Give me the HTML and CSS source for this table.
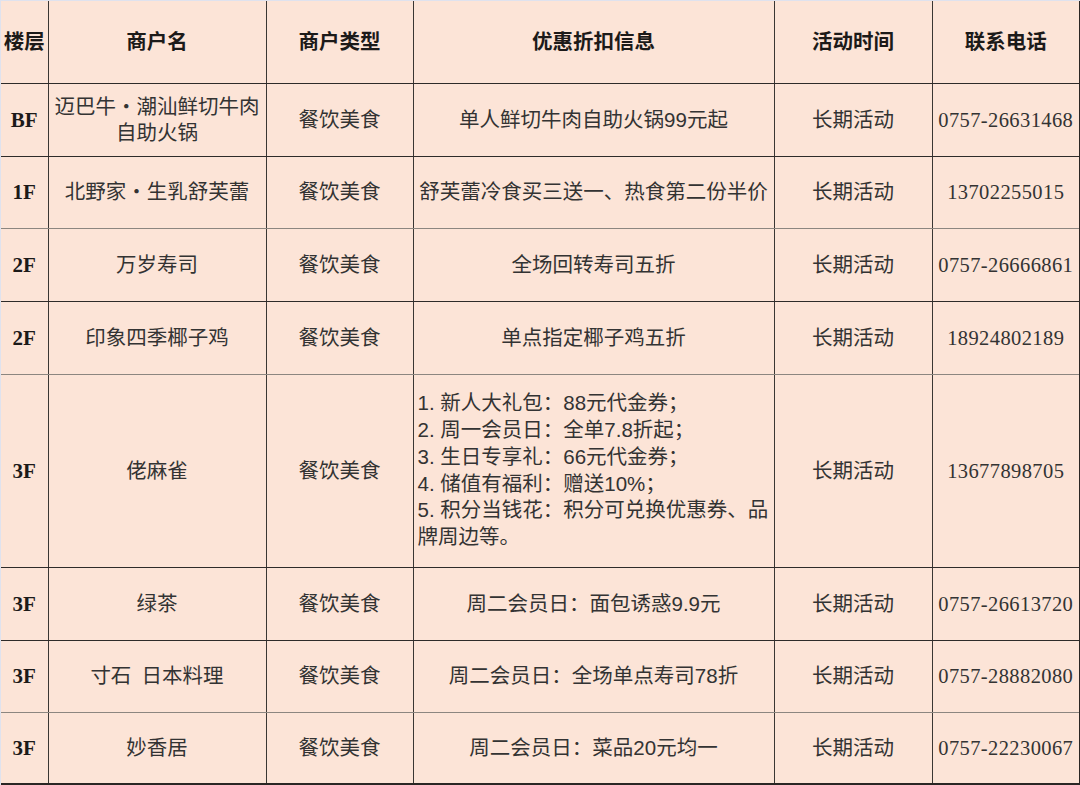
FILE: index.html
```html
<!DOCTYPE html>
<html lang="zh-CN">
<head>
<meta charset="utf-8">
<title>商户优惠信息</title>
<link rel="stylesheet" href="styles.css">
</head>
<body>
<table class="sheet">
  <colgroup>
    <col class="c-floor">
    <col class="c-name">
    <col class="c-type">
    <col class="c-deal">
    <col class="c-time">
    <col class="c-tel">
  </colgroup>
  <thead>
    <tr class="head">
      <th>楼层</th>
      <th>商户名</th>
      <th>商户类型</th>
      <th>优惠折扣信息</th>
      <th>活动时间</th>
      <th>联系电话</th>
    </tr>
  </thead>
  <tbody>
    <tr class="row">
      <td class="floor">BF</td>
      <td>迈巴牛・潮汕鲜切牛肉<br>自助火锅</td>
      <td>餐饮美食</td>
      <td class="deal">单人鲜切牛肉自助火锅99元起</td>
      <td>长期活动</td>
      <td class="tel">0757-26631468</td>
    </tr>
    <tr class="row short soft">
      <td class="floor">1F</td>
      <td>北野家・生乳舒芙蕾</td>
      <td>餐饮美食</td>
      <td class="deal">舒芙蕾冷食买三送一、热食第二份半价</td>
      <td>长期活动</td>
      <td class="tel">13702255015</td>
    </tr>
    <tr class="row">
      <td class="floor">2F</td>
      <td>万岁寿司</td>
      <td>餐饮美食</td>
      <td class="deal">全场回转寿司五折</td>
      <td>长期活动</td>
      <td class="tel">0757-26666861</td>
    </tr>
    <tr class="row soft">
      <td class="floor">2F</td>
      <td>印象四季椰子鸡</td>
      <td>餐饮美食</td>
      <td class="deal">单点指定椰子鸡五折</td>
      <td>长期活动</td>
      <td class="tel">18924802189</td>
    </tr>
    <tr class="row tall">
      <td class="floor">3F</td>
      <td>佬麻雀</td>
      <td>餐饮美食</td>
      <td class="deal list">1. 新人大礼包：88元代金券；<br>2. 周一会员日：全单7.8折起；<br>3. 生日专享礼：66元代金券；<br>4. 储值有福利：赠送10%；<br>5. 积分当钱花：积分可兑换优惠券、品牌周边等。</td>
      <td>长期活动</td>
      <td class="tel">13677898705</td>
    </tr>
    <tr class="row">
      <td class="floor">3F</td>
      <td>绿茶</td>
      <td>餐饮美食</td>
      <td class="deal">周二会员日：面包诱惑9.9元</td>
      <td>长期活动</td>
      <td class="tel">0757-26613720</td>
    </tr>
    <tr class="row short soft">
      <td class="floor">3F</td>
      <td>寸石&nbsp;&nbsp;日本料理</td>
      <td>餐饮美食</td>
      <td class="deal">周二会员日：全场单点寿司78折</td>
      <td>长期活动</td>
      <td class="tel">0757-28882080</td>
    </tr>
    <tr class="row short last">
      <td class="floor">3F</td>
      <td>妙香居</td>
      <td>餐饮美食</td>
      <td class="deal">周二会员日：菜品20元均一</td>
      <td>长期活动</td>
      <td class="tel">0757-22230067</td>
    </tr>
  </tbody>
</table>
</body>
</html>
```

FILE: styles.css
```css
html, body {
  margin: 0;
  padding: 0;
}

body {
  background: #dfe2ee;
  width: 1080px;
  height: 785px;
  overflow: hidden;
}

.sheet {
  margin: 1px 0 0 1px;
  width: 1079px;
  table-layout: fixed;
  border-collapse: collapse;
  background: #fce4d7;
  font-family: "Liberation Serif", "Noto Sans CJK SC", serif;
  font-size: 20.5px;
  line-height: 26px;
  color: #333;
}

.c-floor { width: 47px; }
.c-name { width: 218px; }
.c-type { width: 147px; }
.c-deal { width: 361px; }
.c-time { width: 158px; }
.c-tel { width: 148px; }

.sheet th,
.sheet td {
  padding: 0;
  text-align: center;
  vertical-align: middle;
  border-left: 1px solid #3a3633;
  border-bottom: 1px solid #2e2b29;
  white-space: nowrap;
}

.sheet th:first-child,
.sheet td:first-child {
  border-left: none;
}

.sheet th:last-child,
.sheet td:last-child {
  border-right: 2px solid #2a2624;
}

.head {
  height: 82px;
}

.head th {
  font-weight: 700;
  color: #1c1a19;
}

.row {
  height: 73px;
}

.row.short {
  height: 72px;
}

.row.soft td {
  border-bottom-color: #8c8680;
}

.row.tall {
  height: 193px;
}

.row.last {
  height: 72px;
}

.row.last td {
  border-bottom: 2px solid #2a2624;
}

.floor {
  font-weight: 700;
  font-size: 21px;
  color: #1c1a19;
}

.deal {
  font-family: "Liberation Sans", "Noto Sans CJK SC", sans-serif;
}

.deal.list {
  text-align: left;
  padding-left: 4px;
  white-space: normal;
  line-height: 26.7px;
}

.tel {
  letter-spacing: 0.4px;
}
```
